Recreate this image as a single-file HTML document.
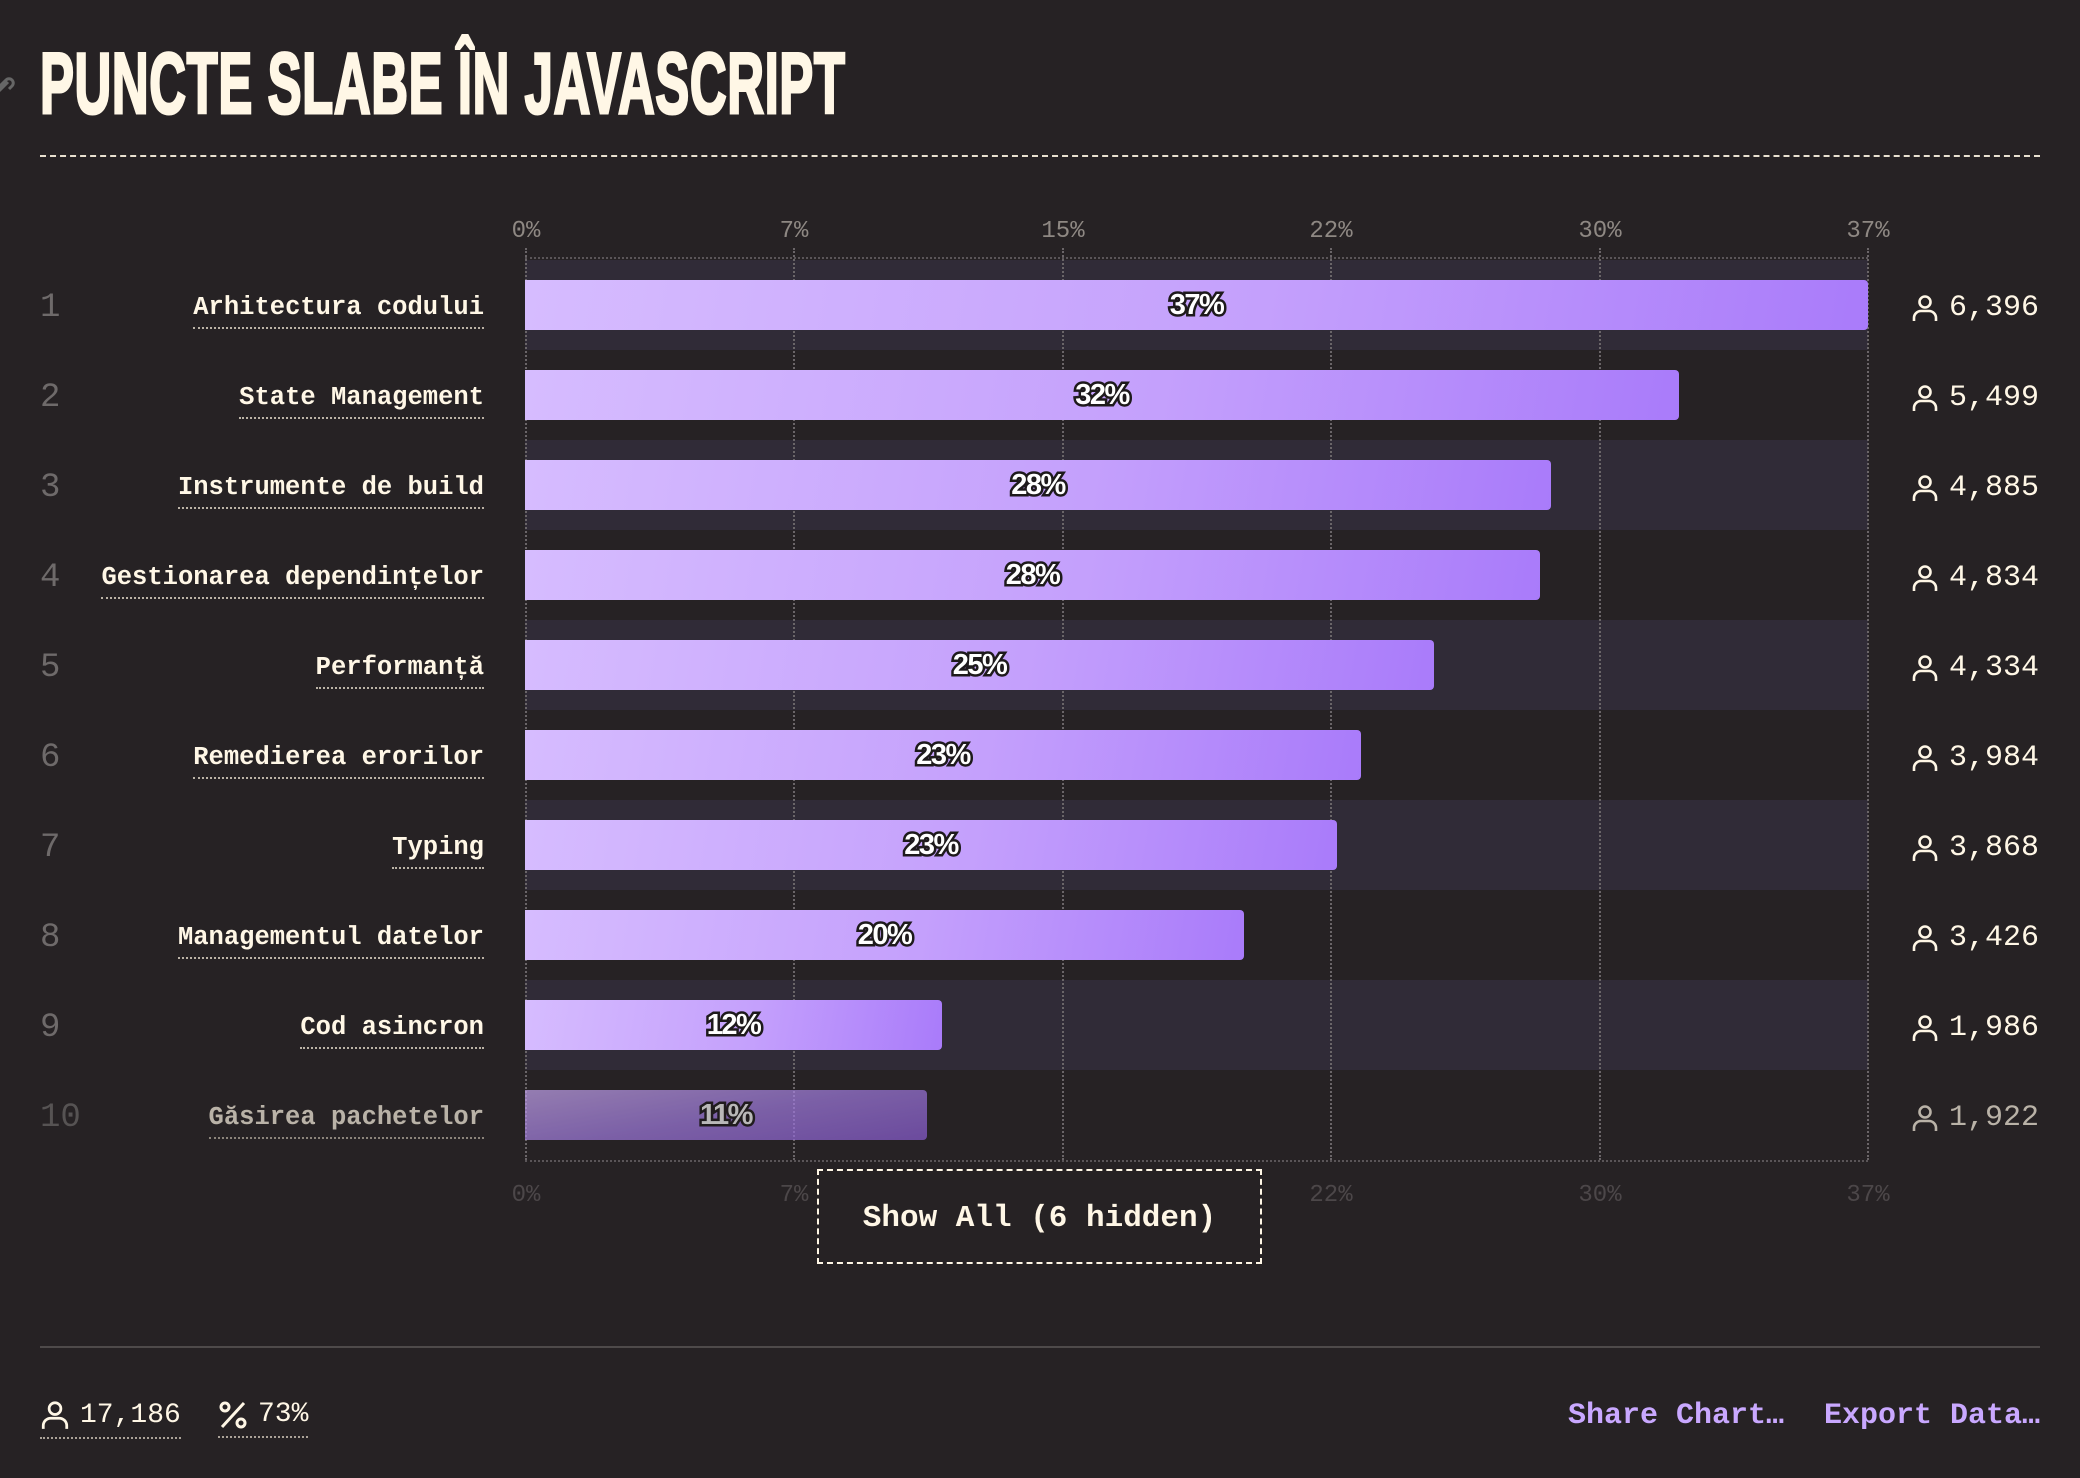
<!DOCTYPE html>
<html><head><meta charset="utf-8"><style>
*{margin:0;padding:0;box-sizing:border-box}
body{width:2080px;height:1478px;background:#262224;position:relative;overflow:hidden;font-family:"Liberation Mono",monospace;color:#fff7e6}
.a{position:absolute}
.title{left:40px;top:34px;font-family:"Liberation Sans Narrow","Liberation Sans",sans-serif;font-weight:700;font-size:86px;line-height:100px;color:#fff7e6;white-space:nowrap;transform:scaleX(0.592);transform-origin:left;letter-spacing:1px;-webkit-text-stroke:3px #fff7e6}
.hr{left:40px;width:2000px;top:155px;border-top:2px dashed #e8e0d0}
.stripe{left:525px;width:1343px;height:90px;background:#302b37}
.grid{top:248px;width:0;height:912px;border-left:2px dotted #6a6568}
.hl{left:525px;width:1343px;border-top:2px dotted #5a5558}
.ax{font-size:24px;width:80px;margin-left:-40px;text-align:center;color:#8e8883;font-family:"Liberation Mono",monospace}
.ax2{color:#4c4749}
.num{left:40px;font-size:34px;color:#6e6a6a;line-height:40px}
.lab{right:1596px;font-size:25.5px;font-weight:700;line-height:34px;white-space:nowrap;border-bottom:2px dotted #bbb3a6;padding-bottom:2px}
.bar{left:525px;height:50px;border-radius:0 4px 4px 0;background:linear-gradient(100deg,#d6bcff 0%,#c4a0fc 55%,#a97bfa 100%)}
.pct{position:absolute;top:0;left:0;right:0;text-align:center;line-height:50px;font-family:"Liberation Sans",sans-serif;font-weight:900;font-size:29px;color:#fff;-webkit-text-stroke:5px #1e1a1c;paint-order:stroke fill;letter-spacing:-1.5px}
.cnt{right:41px;font-size:30px;line-height:40px;white-space:nowrap;display:flex;align-items:center;gap:10px}
.fade{opacity:.68}
.btn{left:817px;top:1169px;width:445px;height:95px;border:2px dashed #fff7e6;background:#262224;font-size:31px;font-weight:700;display:flex;align-items:center;justify-content:center;white-space:nowrap;padding-top:4px}
.fl{left:40px;width:2000px;top:1346px;border-top:2px solid #4e4a4a}
.link{font-size:30px;font-weight:700;color:#c9a8ff;top:1399px}
.st{top:1399px;font-size:28px;display:flex;align-items:center;gap:10px;border-bottom:2px dotted #aaa298;padding-bottom:6px}
.r{margin-top:3px}
</style></head><body>
<svg class="a" style="left:-6px;top:70px" width="26" height="30" viewBox="0 0 26 30"><path d="M4 18l8-8a4 4 0 0 1 6 6l-3 3M14 12l-8 8a4 4 0 0 1-6-6l3-3" fill="none" stroke="#666" stroke-width="3"/></svg>
<div class="a title">PUNCTE SLABE ÎN JAVASCRIPT</div>
<div class="a hr"></div>

<div class="a stripe" style="top:260px"></div>
<div class="a stripe" style="top:440px"></div>
<div class="a stripe" style="top:620px"></div>
<div class="a stripe" style="top:800px"></div>
<div class="a stripe" style="top:980px"></div>

<div class="a hl" style="top:257px"></div>
<div class="a hl" style="top:1160px"></div>
<div class="a grid" style="left:525px"></div>
<div class="a grid" style="left:793px"></div>
<div class="a grid" style="left:1062px"></div>
<div class="a grid" style="left:1330px"></div>
<div class="a grid" style="left:1599px"></div>
<div class="a grid" style="left:1867px"></div>

<div class="a ax" style="left:526px;top:218px">0%</div>
<div class="a ax" style="left:794px;top:218px">7%</div>
<div class="a ax" style="left:1063px;top:218px">15%</div>
<div class="a ax" style="left:1331px;top:218px">22%</div>
<div class="a ax" style="left:1600px;top:218px">30%</div>
<div class="a ax" style="left:1868px;top:218px">37%</div>
<div class="a ax ax2" style="left:526px;top:1182px">0%</div>
<div class="a ax ax2" style="left:794px;top:1182px">7%</div>
<div class="a ax ax2" style="left:1063px;top:1182px">15%</div>
<div class="a ax ax2" style="left:1331px;top:1182px">22%</div>
<div class="a ax ax2" style="left:1600px;top:1182px">30%</div>
<div class="a ax ax2" style="left:1868px;top:1182px">37%</div>

<div class="a num r" style="top:285px">1</div>
<div class="a lab r" style="top:288px">Arhitectura codului</div>
<div class="a bar" style="top:280px;width:1343px"><div class="pct">37%</div></div>
<div class="a cnt r" style="top:285px"><svg width="28" height="30" viewBox="0 0 28 30"><circle cx="14" cy="9" r="5.5" fill="none" stroke="#fff7e6" stroke-width="2.6"/><path d="M3 28v-3a7 7 0 0 1 7-7h8a7 7 0 0 1 7 7v3" fill="none" stroke="#fff7e6" stroke-width="2.6"/></svg>6,396</div>

<div class="a num r" style="top:375px">2</div>
<div class="a lab r" style="top:378px">State Management</div>
<div class="a bar" style="top:370px;width:1154px"><div class="pct">32%</div></div>
<div class="a cnt r" style="top:375px"><svg width="28" height="30" viewBox="0 0 28 30"><circle cx="14" cy="9" r="5.5" fill="none" stroke="#fff7e6" stroke-width="2.6"/><path d="M3 28v-3a7 7 0 0 1 7-7h8a7 7 0 0 1 7 7v3" fill="none" stroke="#fff7e6" stroke-width="2.6"/></svg>5,499</div>

<div class="a num r" style="top:465px">3</div>
<div class="a lab r" style="top:468px">Instrumente de build</div>
<div class="a bar" style="top:460px;width:1026px"><div class="pct">28%</div></div>
<div class="a cnt r" style="top:465px"><svg width="28" height="30" viewBox="0 0 28 30"><circle cx="14" cy="9" r="5.5" fill="none" stroke="#fff7e6" stroke-width="2.6"/><path d="M3 28v-3a7 7 0 0 1 7-7h8a7 7 0 0 1 7 7v3" fill="none" stroke="#fff7e6" stroke-width="2.6"/></svg>4,885</div>

<div class="a num r" style="top:555px">4</div>
<div class="a lab r" style="top:558px">Gestionarea dependințelor</div>
<div class="a bar" style="top:550px;width:1015px"><div class="pct">28%</div></div>
<div class="a cnt r" style="top:555px"><svg width="28" height="30" viewBox="0 0 28 30"><circle cx="14" cy="9" r="5.5" fill="none" stroke="#fff7e6" stroke-width="2.6"/><path d="M3 28v-3a7 7 0 0 1 7-7h8a7 7 0 0 1 7 7v3" fill="none" stroke="#fff7e6" stroke-width="2.6"/></svg>4,834</div>

<div class="a num r" style="top:645px">5</div>
<div class="a lab r" style="top:648px">Performanță</div>
<div class="a bar" style="top:640px;width:909px"><div class="pct">25%</div></div>
<div class="a cnt r" style="top:645px"><svg width="28" height="30" viewBox="0 0 28 30"><circle cx="14" cy="9" r="5.5" fill="none" stroke="#fff7e6" stroke-width="2.6"/><path d="M3 28v-3a7 7 0 0 1 7-7h8a7 7 0 0 1 7 7v3" fill="none" stroke="#fff7e6" stroke-width="2.6"/></svg>4,334</div>

<div class="a num r" style="top:735px">6</div>
<div class="a lab r" style="top:738px">Remedierea erorilor</div>
<div class="a bar" style="top:730px;width:836px"><div class="pct">23%</div></div>
<div class="a cnt r" style="top:735px"><svg width="28" height="30" viewBox="0 0 28 30"><circle cx="14" cy="9" r="5.5" fill="none" stroke="#fff7e6" stroke-width="2.6"/><path d="M3 28v-3a7 7 0 0 1 7-7h8a7 7 0 0 1 7 7v3" fill="none" stroke="#fff7e6" stroke-width="2.6"/></svg>3,984</div>

<div class="a num r" style="top:825px">7</div>
<div class="a lab r" style="top:828px">Typing</div>
<div class="a bar" style="top:820px;width:812px"><div class="pct">23%</div></div>
<div class="a cnt r" style="top:825px"><svg width="28" height="30" viewBox="0 0 28 30"><circle cx="14" cy="9" r="5.5" fill="none" stroke="#fff7e6" stroke-width="2.6"/><path d="M3 28v-3a7 7 0 0 1 7-7h8a7 7 0 0 1 7 7v3" fill="none" stroke="#fff7e6" stroke-width="2.6"/></svg>3,868</div>

<div class="a num r" style="top:915px">8</div>
<div class="a lab r" style="top:918px">Managementul datelor</div>
<div class="a bar" style="top:910px;width:719px"><div class="pct">20%</div></div>
<div class="a cnt r" style="top:915px"><svg width="28" height="30" viewBox="0 0 28 30"><circle cx="14" cy="9" r="5.5" fill="none" stroke="#fff7e6" stroke-width="2.6"/><path d="M3 28v-3a7 7 0 0 1 7-7h8a7 7 0 0 1 7 7v3" fill="none" stroke="#fff7e6" stroke-width="2.6"/></svg>3,426</div>

<div class="a num r" style="top:1005px">9</div>
<div class="a lab r" style="top:1008px">Cod asincron</div>
<div class="a bar" style="top:1000px;width:417px"><div class="pct">12%</div></div>
<div class="a cnt r" style="top:1005px"><svg width="28" height="30" viewBox="0 0 28 30"><circle cx="14" cy="9" r="5.5" fill="none" stroke="#fff7e6" stroke-width="2.6"/><path d="M3 28v-3a7 7 0 0 1 7-7h8a7 7 0 0 1 7 7v3" fill="none" stroke="#fff7e6" stroke-width="2.6"/></svg>1,986</div>

<div class="fade">
<div class="a num r" style="top:1095px">10</div>
<div class="a lab r" style="top:1098px">Găsirea pachetelor</div>
<div class="a bar" style="top:1090px;width:402px;background:linear-gradient(170deg,#c9a8f4 0%,#a57ee6 50%,#8d5ed8 100%)"><div class="pct">11%</div></div>
<div class="a cnt r" style="top:1095px"><svg width="28" height="30" viewBox="0 0 28 30"><circle cx="14" cy="9" r="5.5" fill="none" stroke="#fff7e6" stroke-width="2.6"/><path d="M3 28v-3a7 7 0 0 1 7-7h8a7 7 0 0 1 7 7v3" fill="none" stroke="#fff7e6" stroke-width="2.6"/></svg>1,922</div>
</div>

<div class="a btn">Show All (6 hidden)</div>

<div class="a fl"></div>
<div class="a st" style="left:40px"><svg width="30" height="32" viewBox="0 0 28 30"><circle cx="14" cy="9" r="5.5" fill="none" stroke="#fff7e6" stroke-width="2.6"/><path d="M3 28v-3a7 7 0 0 1 7-7h8a7 7 0 0 1 7 7v3" fill="none" stroke="#fff7e6" stroke-width="2.6"/></svg>17,186</div>
<div class="a st" style="left:218px"><svg width="30" height="30" viewBox="0 0 30 30"><circle cx="7" cy="7" r="4" fill="none" stroke="#fff7e6" stroke-width="3"/><circle cx="23" cy="23" r="4" fill="none" stroke="#fff7e6" stroke-width="3"/><path d="M4 27L26 3" stroke="#fff7e6" stroke-width="3"/></svg>73%</div>
<div class="a link" style="left:1568px">Share Chart…</div>
<div class="a link" style="left:1824px">Export Data…</div>
</body></html>
